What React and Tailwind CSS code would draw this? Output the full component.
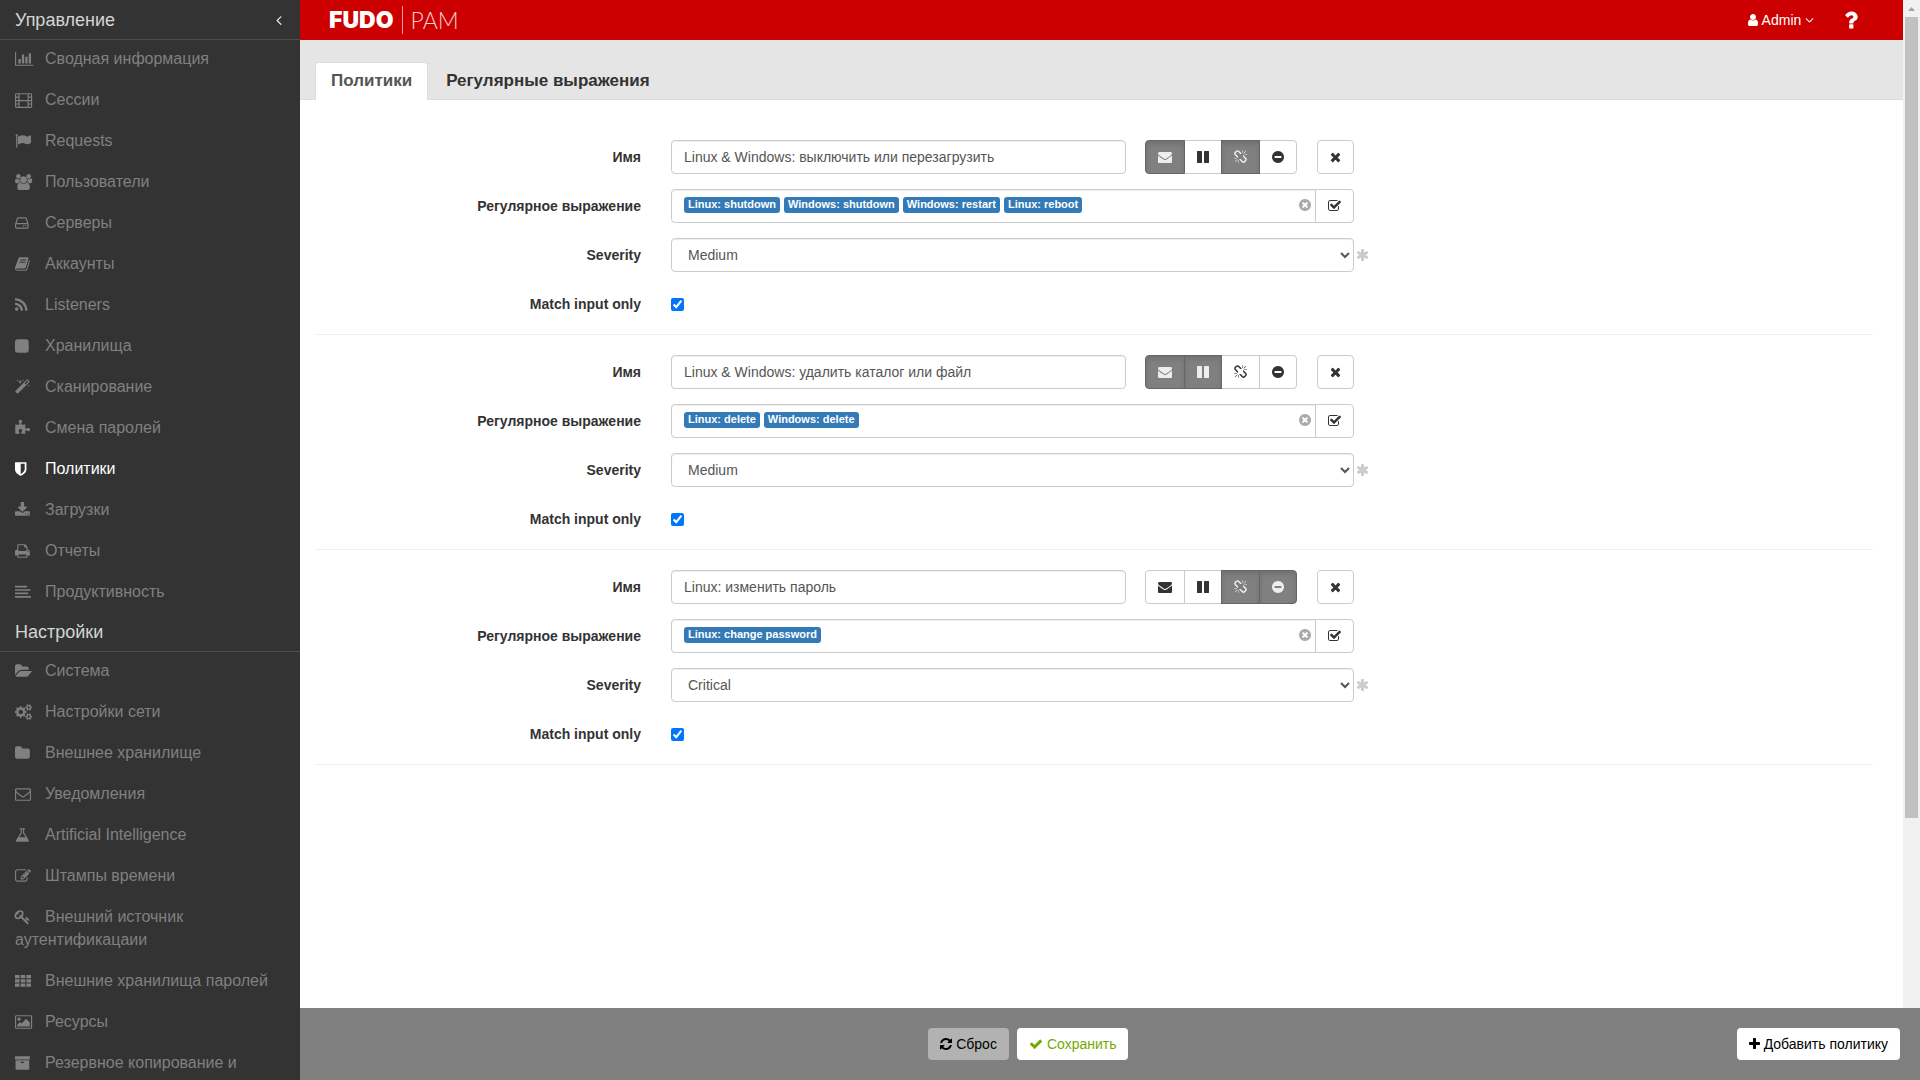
import { useState } from "react";

// [left edge, width, path], drawn on a 1792 unit high grid
const ICONS = {
  chart: [0, 2048, "M640 896v512h-256v-512h256zm384-512v1024h-256v-1024h256zm1024 1152v128h-2048v-1536h128v1408h1920zm-640-896v768h-256v-768h256zm384-384v1152h-256v-1152h256z"],
  film: [0, 1920, "M160 128h1600q66 0 113 47t47 113v1344q0 66-47 113t-113 47h-1600q-66 0-113-47t-47-113v-1344q0-66 47-113t113-47zM128 256v256h256v-256zM128 640v256h256v-256zM128 1024v256h256v-256zM128 1408v256h256v-256zM512 256v640h896v-640zM512 1024v640h896v-640zM1536 256v256h256v-256zM1536 640v256h256v-256zM1536 1024v256h256v-256zM1536 1408v256h256v-256z"],
  flag: [0, 1792, "M320 256q0 72-64 110v1266q0 13-9.5 22.5t-22.5 9.5h-64q-13 0-22.5-9.5t-9.5-22.5v-1266q-64-38-64-110 0-53 37.5-90.5t90.5-37.5 90.5 37.5 37.5 90.5zm1472 64v763q0 25-12.5 38.5t-39.5 27.5q-215 116-369 116-61 0-123.5-22t-108.5-48-115.5-48-142.5-22q-192 0-464 146-17 9-33 9-26 0-45-19t-19-45v-742q0-32 31-55 21-14 79-43 236-120 421-120 107 0 200 29t219 88q38 19 88 19 54 0 117.5-21t110-47 88-47 54.5-21q26 0 45 19t19 45z"],
  users: [0, 1920, "M593 896q-162 5-265 128h-134q-82 0-138-40.5t-56-118.5q0-353 124-353 6 0 43.5 21t97.5 42.5 119 21.5q67 0 133-23-5 37-5 66 0 159 93 293zm1071 637q0 120-73 189.5t-194 69.5h-874q-121 0-194-69.5t-73-189.5q0-53 3.5-103.5t14-109 26.5-108.5 43-97.5 62-81 85.5-53.5 111.5-20q10 0 43 21.5t73 48 107 48 135 21.5 135-21.5 107-48 73-48 43-21.5q61 0 111.5 20t85.5 53.5 62 81 43 97.5 26.5 108.5 14 109 3.5 103.5zm-1024-1277q0 106-75 181t-181 75-181-75-75-181 75-181 181-75 181 75 75 181zm704 384q0 159-112.5 271.5t-271.5 112.5-271.5-112.5-112.5-271.5 112.5-271.5 271.5-112.5 271.5 112.5 112.5 271.5zm576 225q0 78-56 118.5t-138 40.5h-134q-103-123-265-128 93-134 93-293 0-29-5-66 66 23 133 23 59 0 119-21.5t97.5-42.5 43.5-21q124 0 124 353zm-128-609q0 106-75 181t-181 75-181-75-75-181 75-181 181-75 181 75 75 181z"],
  disk: [128, 1536, "M1168 1216q0 33-23.5 56.5t-56.5 23.5-56.5-23.5-23.5-56.5 23.5-56.5 56.5-23.5 56.5 23.5 23.5 56.5zm256 0q0 33-23.5 56.5t-56.5 23.5-56.5-23.5-23.5-56.5 23.5-56.5 56.5-23.5 56.5 23.5 23.5 56.5zm112 160v-320q0-13-9.5-22.5t-22.5-9.5h-1216q-13 0-22.5 9.5t-9.5 22.5v320q0 13 9.5 22.5t22.5 9.5h1216q13 0 22.5-9.5t9.5-22.5zm-1230-480h1180l-157-482q-4-13-16-21.5t-26-8.5h-782q-14 0-26 8.5t-16 21.5zm1358 160v320q0 66-47 113t-113 47h-1216q-66 0-113-47t-47-113v-320q0-25 16-75l197-606q17-53 63-86t101-33h782q55 0 101 33t63 86l197 606q16 50 16 75z"],
  book: [64, 1664, "M1703 478q40 57 18 129l-275 906q-19 64-76.5 107.5t-122.5 43.5h-923q-77 0-148.5-53.5t-99.5-131.5q-24-67-2-127 0-4 3-27t4-37q1-8-3-21.5t-3-19.5q2-11 8-21t16.5-23.5 16.5-23.5q23-38 45-91.5t30-91.5q3-10 .5-30t-.5-28q3-11 17-28t17-23q21-36 42-92t25-90q1-9-2.5-32t.5-28q4-13 22-30.5t22-22.5q19-26 42.5-84.5t27.5-96.5q1-8-3-25.5t-2-26.5q2-8 9-18t18-23 17-21q8-12 16.5-30.5t15-35 16-36 19.5-32 26.5-23.5 36-11.5 47.5 5.5l-1 3q38-9 51-9h761q74 0 114 56t18 130l-274 906q-36 119-71.5 153.5t-128.5 34.5h-869q-27 0-38 15-11 16-1 43 24 70 144 70h923q29 0 56-15.5t35-41.5l300-987q7-22 5-57 38 15 59 43zm-1064 2q-4 13 2 22.5t20 9.5h608q13 0 25.5-9.5t16.5-22.5l21-64q4-13-2-22.5t-20-9.5h-608q-13 0-25.5 9.5t-16.5 22.5zm-83 256q-4 13 2 22.5t20 9.5h608q13 0 25.5-9.5t16.5-22.5l21-64q4-13-2-22.5t-20-9.5h-608q-13 0-25.5 9.5t-16.5 22.5z"],
  rss: [192, 1408, "M576 1344q0 80-56 136t-136 56-136-56-56-136 56-136 136-56 136 56 56 136zm512 123q2 28-17 48-18 21-47 21h-135q-25 0-43-16.5t-20-41.5q-22-229-184.5-391.5t-391.5-184.5q-25-2-41.5-20t-16.5-43v-135q0-29 21-47 17-17 43-17h5q160 13 306 80.5t259 181.5q114 113 181.5 259t80.5 306zm512 2q2 27-18 47-18 20-46 20h-143q-26 0-44.5-17.5t-19.5-42.5q-12-215-101-408.5t-231.5-336-336-231.5-408.5-102q-25-1-42.5-19.5t-17.5-43.5v-143q0-28 20-46 18-18 44-18h3q262 13 501.5 120t425.5 294q187 186 294 425.5t120 501.5z"],
  square: [128, 1536, "M1664 416v960q0 119-84.5 203.5t-203.5 84.5h-960q-119 0-203.5-84.5t-84.5-203.5v-960q0-119 84.5-203.5t203.5-84.5h960q119 0 203.5 84.5t84.5 203.5z"],
  wand: [0, 1664, "M1190 581l293-293-107-107-293 293zm447-293q0 27-18 45l-1286 1286q-18 18-45 18t-45-18l-198-198q-18-18-18-45t18-45l1286-1286q18-18 45-18t45 18l198 198q18 18 18 45zm-1351-190l98 30-98 30-30 98-30-98-98-30 98-30 30-98zm350 162l196 60-196 60-60 196-60-196-196-60 196-60 60-196zm930 478l98 30-98 30-30 98-30-98-98-30 98-30 30-98zm-640-640l98 30-98 30-30 98-30-98-98-30 98-30 30-98z"],
  puzzle: [64, 1728, "M1755 1083q0 81-44.5 135t-123.5 54q-41 0-77.5-17.5t-59-38-56.5-38-71-17.5q-110 0-110 124 0 39 16 115t15 115v5q-22 0-33 1-34 3-97.5 11.5t-115.5 13.5-98 5q-61 0-103-26.5t-42-83.5q0-37 17.5-71t38-56.5 38-59 17.5-77.5q0-79-54-123.5t-135-44.5q-84 0-143 45.5t-59 127.5q0 43 15 83t33.5 64.5 33.5 53 15 50.5q0 45-46 89-37 35-117 35-95 0-245-24-9-2-27.5-4t-27.5-4l-13-2q-1 0-3-1-2 0-2-1v-1024q2 1 17.5 3.5t34 5 21.5 3.5q150 24 245 24 80 0 117-35 46-44 46-89 0-22-15-50.5t-33.5-53-33.5-64.5-15-83q0-82 59-127.5t144-45.5q80 0 134 44.5t54 123.5q0 41-17.5 77.5t-38 59-38 56.5-17.5 71q0 57 42 83.5t103 26.5q64 0 180-15t163-17v2q-1 2-3.5 17.5t-5 34-3.5 21.5q-24 150-24 245 0 80 35 117 44 46 89 46 22 0 50.5-15t53-33.5 64.5-33.5 83-15q82 0 127.5 59t45.5 143z"],
  shield: [256, 1280, "M1344 960v-640h-448v1137q119-63 213-137 235-184 235-360zm192-768v768q0 86-33.5 170.5t-83 150-118 127.5-126.5 103-121 77.5-89.5 49.5-42.5 20q-12 6-26 6t-26-6q-16-7-42.5-20t-89.5-49.5-121-77.5-126.5-103-118-127.5-83-150-33.5-170.5v-768q0-26 19-45t45-19h1152q26 0 45 19t19 45z"],
  download: [64, 1664, "M1344 1344q0-26-19-45t-45-19-45 19-19 45 19 45 45 19 45-19 19-45zm256 0q0-26-19-45t-45-19-45 19-19 45 19 45 45 19 45-19 19-45zm128-224v320q0 40-28 68t-68 28h-1472q-40 0-68-28t-28-68v-320q0-40 28-68t68-28h465l135 136q58 56 136 56t136-56l136-136h464q40 0 68 28t28 68zm-325-569q17 41-14 70l-448 448q-18 19-45 19t-45-19l-448-448q-31-29-14-70 17-39 59-39h256v-448q0-26 19-45t45-19h256q26 0 45 19t19 45v448h256q42 0 59 39z"],
  print: [64, 1664, "M448 1536h896v-256h-896v256zm0-640h896v-384h-160q-40 0-68-28t-28-68v-160h-640v640zm1152 64q0-26-19-45t-45-19-45 19-19 45 19 45 45 19 45-19 19-45zm128 0v416q0 13-9.5 22.5t-22.5 9.5h-224v160q0 40-28 68t-68 28h-960q-40 0-68-28t-28-68v-160h-224q-13 0-22.5-9.5t-9.5-22.5v-416q0-79 56.5-135.5t135.5-56.5h64v-544q0-40 28-68t68-28h672q40 0 88 20t76 48l152 152q28 28 48 76t20 88v256h64q79 0 135.5 56.5t56.5 135.5z"],
  lines: [0, 1792, "M0 192h1344v192h-1344zM0 576h1728v192h-1728zM0 960h1472v192h-1472zM0 1344h1792v192h-1792z"],
  folderOpen: [0, 1920, "M1879 952q0 31-31 66l-336 396q-43 51-120.5 86.5t-143.5 35.5h-1088q-34 0-60.5-13t-26.5-43q0-31 31-66l336-396q43-51 120.5-86.5t143.5-35.5h1088q34 0 60.5 13t26.5 43zm-343-344v160h-832q-94 0-197 47.5t-164 119.5l-337 396-5 6q0-4-.5-12.5t-.5-12.5v-960q0-92 66-158t158-66h320q92 0 158 66t66 158v32h544q92 0 158 66t66 158z"],
  cogs: [0, 1920, "M896 896q0-106-75-181t-181-75-181 75-75 181 75 181 181 75 181-75 75-181zm768 512q0-52-38-90t-90-38-90 38-38 90q0 53 37.5 90.5t90.5 37.5 90.5-37.5 37.5-90.5zm0-1024q0-52-38-90t-90-38-90 38-38 90q0 53 37.5 90.5t90.5 37.5 90.5-37.5 37.5-90.5zm-384 421v185q0 10-7 19.5t-16 10.5l-155 24q-11 35-32 76 34 48 90 115 7 11 7 20 0 12-7 19-23 30-82.5 89.5t-78.5 59.5q-11 0-21-7l-115-90q-37 19-77 31-11 108-23 155-7 24-30 24h-186q-11 0-20-7.5t-10-17.5l-23-153q-34-10-75-31l-118 89q-7 7-20 7-11 0-21-8-144-133-144-160 0-9 7-19 10-14 41-53t47-61q-23-44-35-82l-152-24q-10-1-17-9.5t-7-19.5v-185q0-10 7-19.5t16-10.5l155-24q11-35 32-76-34-48-90-115-7-11-7-20 0-12 7-20 22-30 82-89t79-59q11 0 21 7l115 90q34-18 77-32 11-108 23-154 7-24 30-24h186q11 0 20 7.5t10 17.5l23 153q34 10 75 31l118-89q8-7 20-7 11 0 21 8 144 133 144 160 0 8-7 19-12 16-42 54t-45 60q23 48 34 82l152 23q10 2 17 10.5t7 19.5zm640 533v140q0 16-149 31-12 27-30 52 51 113 51 138 0 4-4 7-122 71-124 71-8 0-46-47t-52-68q-20 2-30 2t-30-2q-14 21-52 68t-46 47q-2 0-124-71-4-3-4-7 0-25 51-138-18-25-30-52-149-15-149-31v-140q0-16 149-31 13-29 30-52-51-113-51-138 0-4 4-7 4-2 35-20t59-34 30-16q8 0 46 46.5t52 67.5q20-2 30-2t30 2q51-71 92-112l6-2q4 0 124 70 4 3 4 7 0 25-51 138 17 23 30 52 149 15 149 31zm0-1024v140q0 16-149 31-12 27-30 52 51 113 51 138 0 4-4 7-122 71-124 71-8 0-46-47t-52-68q-20 2-30 2t-30-2q-14 21-52 68t-46 47q-2 0-124-71-4-3-4-7 0-25 51-138-18-25-30-52-149-15-149-31v-140q0-16 149-31 13-29 30-52-51-113-51-138 0-4 4-7 4-2 35-20t59-34 30-16q8 0 46 46.5t52 67.5q20-2 30-2t30 2q51-71 92-112l6-2q4 0 124 70 4 3 4 7 0 25-51 138 17 23 30 52 149 15 149 31z"],
  folder: [64, 1664, "M1728 608v704q0 92-66 158t-158 66h-1216q-92 0-158-66t-66-158v-960q0-92 66-158t158-66h320q92 0 158 66t66 158v32h672q92 0 158 66t66 158z"],
  mailOutline: [0, 1792, "M1664 1504v-768q-32 36-69 66-268 206-426 338-51 43-83 67t-86.5 48.5-102.5 24.5h-2q-48 0-102.5-24.5t-86.5-48.5-83-67q-158-132-426-338-37-30-69-66v768q0 13 9.5 22.5t22.5 9.5h1472q13 0 22.5-9.5t9.5-22.5zm0-1051v-24.5l-.5-13-3-12.5-5.5-9-9-7.5-14-2.5h-1472q-13 0-22.5 9.5t-9.5 22.5q0 168 147 284 193 152 401 317 6 5 35 29.5t46 37.5 44.5 31.5 50.5 27.5 43 9h2q20 0 43-9t50.5-27.5 44.5-31.5 46-37.5 35-29.5q208-165 401-317 54-43 100.5-115.5t46.5-131.5zm128-37v1088q0 66-47 113t-113 47h-1472q-66 0-113-47t-47-113v-1088q0-66 47-113t113-47h1472q66 0 113 47t47 113z"],
  flask: [64, 1664, "M1591 1448q56 89 21.5 152.5t-140.5 63.5h-1152q-106 0-140.5-63.5t21.5-152.5l503-793v-399h-64q-26 0-45-19t-19-45 19-45 45-19h512q26 0 45 19t19 45-19 45-45 19h-64v399zm-779-725l-272 429h712l-272-429-20-31v-436h-128v436z"],
  edit: [0, 1792, "M888 1184l116-116-152-152-116 116v56h96v96h56zm440-720q-16-16-33 1l-350 350q-17 17-1 33t33-1l350-350q17-17 1-33zm80 594v190q0 119-84.5 203.5t-203.5 84.5h-832q-119 0-203.5-84.5t-84.5-203.5v-832q0-119 84.5-203.5t203.5-84.5h832q63 0 117 25 15 7 18 23 3 17-9 29l-49 49q-14 14-32 8-23-6-45-6h-832q-66 0-113 47t-47 113v832q0 66 47 113t113 47h832q66 0 113-47t47-113v-126q0-13 9-22l64-64q15-15 35-7t20 29zm-96-738l288 288-672 672h-288v-288zm444 132l-92 92-288-288 92-92q28-28 68-28t68 28l152 152q28 28 28 68t-28 68z"],
  key: [64, 1728, "M832 512q0-80-56-136t-136-56-136 56-56 136q0 42 19 83-41-19-83-19-80 0-136 56t-56 136 56 136 136 56 136-56 56-136q0-42-19-83 41 19 83 19 80 0 136-56t56-136zm851 704q0 17-49 66t-66 49q-9 0-28.5-16t-36.5-33-38.5-40-24.5-26l-96 96 220 220q28 28 28 68 0 42-39 81t-81 39q-40 0-68-28l-671-671q-176 131-365 131-163 0-265.5-102.5t-102.5-265.5q0-160 95-313t248-248 313-95q163 0 265.5 102.5t102.5 265.5q0 189-131 365l355 355 96-96q-3-3-26-24.5t-40-38.5-33-36.5-16-28.5q0-17 49-66t66-49q13 0 23 10 6 6 46 44.5t82 79.5 86.5 86 73 78 28.5 41z"],
  grid: [0, 1792, "M0 224h512v352h-512zM640 224h512v352h-512zM1280 224h512v352h-512zM0 704h512v352h-512zM640 704h512v352h-512zM1280 704h512v352h-512zM0 1184h512v352h-512zM640 1184h512v352h-512zM1280 1184h512v352h-512z"],
  image: [0, 1920, "M640 576q0 80-56 136t-136 56-136-56-56-136 56-136 136-56 136 56 56 136zm1024 384v448h-1408v-192l320-320 160 160 512-512zm96-704h-1600q-13 0-22.5 9.5t-9.5 22.5v1216q0 13 9.5 22.5t22.5 9.5h1600q13 0 22.5-9.5t9.5-22.5v-1216q0-13-9.5-22.5t-22.5-9.5zm160 32v1216q0 66-47 113t-113 47h-1600q-66 0-113-47t-47-113v-1216q0-66 47-113t113-47h1600q66 0 113 47t47 113z"],
  archive: [64, 1728, "M1088 832q0-26-19-45t-45-19h-256q-26 0-45 19t-19 45 19 45 45 19h256q26 0 45-19t19-45zm576-192v960q0 26-19 45t-45 19h-1408q-26 0-45-19t-19-45v-960q0-26 19-45t45-19h1408q26 0 45 19t19 45zm64-448v256q0 26-19 45t-45 19h-1536q-26 0-45-19t-19-45v-256q0-26 19-45t45-19h1536q26 0 45 19t19 45z"],
  mail: [0, 1792, "M1792 710v794q0 66-47 113t-113 47h-1472q-66 0-113-47t-47-113v-794q44 49 101 87 362 246 497 345 57 42 92.5 65.5t94.5 48 110 24.5h2q51 0 110-24.5t94.5-48 92.5-65.5q170-123 498-345 57-39 100-87zm0-294q0 79-49 151t-122 123q-376 261-468 325-10 7-42.5 31t-54 38.5-52 32.5-57.5 27-50 9h-2q-23 0-50-9t-57.5-27-52-32.5-54-38.5-42.5-31q-91-64-262-182.5t-205-142.5q-62-42-117-115.5t-55-136.5q0-78 41.5-130t118.5-52h1472q65 0 112.5 47t47.5 113z"],
  pause: [128, 1536, "M1664 192v1408q0 26-19 45t-45 19h-512q-26 0-45-19t-19-45v-1408q0-26 19-45t45-19h512q26 0 45 19t19 45zm-896 0v1408q0 26-19 45t-45 19h-512q-26 0-45-19t-19-45v-1408q0-26 19-45t45-19h512q26 0 45 19t19 45z"],
  unlink: [64, 1664, "M503 1271l-256 256q-10 9-23 9-12 0-23-9-9-10-9-23t9-23l256-256q10-9 23-9t23 9q9 10 9 23t-9 23zm169 41v320q0 14-9 23t-23 9-23-9-9-23v-320q0-14 9-23t23-9 23 9 9 23zm-224-224q0 14-9 23t-23 9h-320q-14 0-23-9t-9-23 9-23 23-9h320q14 0 23 9t9 23zm1264 128q0 120-85 203l-147 146q-83 83-203 83-121 0-204-85l-334-335q-21-21-42-56l239-18 273 274q28 28 68 27.5t68-27.5l147-146q28-28 28-67 0-40-28-68l-274-275 18-239q35 21 56 42l336 336q84 86 84 204zm-617-724l-239 18-273-274q-28-28-68-28-39 0-68 27l-147 146q-28 28-28 67 0 40 28 68l274 274-18 240q-35-21-56-42l-336-336q-84-86-84-204 0-120 85-203l147-146q83-83 203-83 121 0 204 85l334 335q21 21 42 56zm633 84q0 14-9 23t-23 9h-320q-14 0-23-9t-9-23 9-23 23-9h320q14 0 23 9t9 23zm-544-544v320q0 14-9 23t-23 9-23-9-9-23v-320q0-14 9-23t23-9 23 9 9 23zm407 151l-256 256q-11 9-23 9t-23-9q-9-10-9-23t9-23l256-256q10-9 23-9t23 9q9 10 9 23t-9 23z"],
  block: [128, 1536, "M1344 960v-128q0-26-19-45t-45-19h-768q-26 0-45 19t-19 45v128q0 26 19 45t45 19h768q26 0 45-19t19-45zm320-64q0 209-103 385.5t-279.5 279.5-385.5 103-385.5-103-279.5-279.5-103-385.5 103-385.5 279.5-279.5 385.5-103 385.5 103 279.5 279.5 103 385.5z"],
  times: [192, 1408, "M1490 1322q0 40-28 68l-136 136q-28 28-68 28t-68-28l-294-294-294 294q-28 28-68 28t-68-28l-136-136q-28-28-28-68t28-68l294-294-294-294q-28-28-28-68t28-68l136-136q28-28 68-28t68 28l294 294 294-294q28-28 68-28t68 28l136 136q28 28 28 68t-28 68l-294 294 294 294q28 28 28 68z"],
  clear: [128, 1536, "M1277 1122q0-26-19-45l-181-181 181-181q19-19 19-45 0-27-19-46l-90-90q-19-19-46-19-26 0-45 19l-181 181-181-181q-19-19-45-19-27 0-46 19l-90 90q-19 19-19 46 0 26 19 45l181 181-181 181q-19 19-19 45 0 27 19 46l90 90q19 19 46 19 26 0 45-19l181-181 181 181q19 19 45 19 27 0 46-19l90-90q19-19 19-46zm387-226q0 209-103 385.5t-279.5 279.5-385.5 103-385.5-103-279.5-279.5-103-385.5 103-385.5 279.5-279.5 385.5-103 385.5 103 279.5 279.5 103 385.5z"],
  checkSquare: [64, 1664, "M1472 930v318q0 119-84.5 203.5t-203.5 84.5h-832q-119 0-203.5-84.5t-84.5-203.5v-832q0-119 84.5-203.5t203.5-84.5h832q63 0 117 25 15 7 18 23 3 17-9 29l-49 49q-10 10-23 10-3 0-9-2-23-6-45-6h-832q-66 0-113 47t-47 113v832q0 66 47 113t113 47h832q66 0 113-47t47-113v-254q0-13 9-22l64-64q10-10 23-10 6 0 12 3 20 8 20 29zm231-489l-814 814q-24 24-57 24t-57-24l-430-430q-24-24-24-57t24-57l110-110q24-24 57-24t57 24l263 263 647-647q24-24 57-24t57 24l110 110q24 24 24 57t-24 57z"],
  asterisk: [64, 1664, "M1546 1050q46 26 59.5 77.5t-12.5 97.5l-64 110q-26 46-77.5 59.5t-97.5-12.5l-266-153v307q0 52-38 90t-90 38h-128q-52 0-90-38t-38-90v-307l-266 153q-46 26-97.5 12.5t-77.5-59.5l-64-110q-26-46-12.5-97.5t59.5-77.5l266-154-266-154q-46-26-59.5-77.5t12.5-97.5l64-110q26-46 77.5-59.5t97.5 12.5l266 153v-307q0-52 38-90t90-38h128q52 0 90 38t38 90v307l266-153q46-26 97.5-12.5t77.5 59.5l64 110q26 46 12.5 97.5t-59.5 77.5l-266 154z"],
  user: [256, 1280, "M1536 1399q0 109-62.5 187t-150.5 78h-854q-88 0-150.5-78t-62.5-187q0-85 8.5-160.5t31.5-152 58.5-131 94-89 134.5-34.5q131 128 313 128t313-128q76 0 134.5 34.5t94 89 58.5 131 31.5 152 8.5 160.5zm-256-887q0 159-112.5 271.5t-271.5 112.5-271.5-112.5-112.5-271.5 112.5-271.5 271.5-112.5 271.5 112.5 112.5 271.5z"],
  question: [384, 1024, "M1088 1256v240q0 16-12 28t-28 12h-240q-16 0-28-12t-12-28v-240q0-16 12-28t28-12h240q16 0 28 12t12 28zm316-600q0 54-15.5 101t-35 76.5-55 59.5-57.5 43.5-61 35.5q-41 23-68.5 65t-27.5 67q0 17-12 32.5t-28 15.5h-240q-15 0-25.5-18.5t-10.5-37.5v-45q0-83 65-156.5t143-108.5q59-27 84-56t25-76q0-42-46.5-74t-107.5-32q-65 0-108 29-35 25-107 115-13 16-31 16-12 0-25-8l-164-125q-13-10-15.5-25t5.5-28q160-266 464-266 80 0 161 31t146 83 106 127.5 41 158.5z"],
  angleDown: [320, 1152, "M1395 736q0 13-10 23l-466 466q-10 10-23 10t-23-10l-466-466q-10-10-10-23t10-23l50-50q10-10 23-10t23 10l393 393 393-393q10-10 23-10t23 10l50 50q10 10 10 23z"],
  angleLeft: [576, 640, "M1203 544q0 13-10 23l-393 393 393 393q10 10 10 23t-10 23l-50 50q-10 10-23 10t-23-10l-466-466q-10-10-10-23t10-23l466-466q10-10 23-10t23 10l50 50q10 10 10 23z"],
  refresh: [128, 1536, "M1639 1056q0 5-1 7-64 268-268 434.5t-478 166.5q-146 0-282.5-55t-243.5-157l-129 129q-19 19-45 19t-45-19-19-45v-448q0-26 19-45t45-19h448q26 0 45 19t19 45-19 45l-137 137q71 66 161 102t187 36q134 0 250-65t186-179q11-17 53-117 8-23 30-23h192q13 0 22.5 9.5t9.5 22.5zm25-800v448q0 26-19 45t-45 19h-448q-26 0-45-19t-19-45 19-45l138-138q-148-137-349-137-134 0-250 65t-186 179q-11 17-53 117-8 23-30 23h-199q-13 0-22.5-9.5t-9.5-22.5v-7q65-268 270-434.5t480-166.5q146 0 284 55.5t245 156.5l130-129q19-19 45-19t45 19 19 45z"],
  check: [0, 1792, "M1671 566q0 40-28 68l-724 724-136 136q-28 28-68 28t-68-28l-136-136-362-362q-28-28-28-68t28-68l136-136q28-28 68-28t68 28l294 295 656-657q28-28 68-28t68 28l136 136q28 28 28 68z"],
  plus: [192, 1408, "M1600 736v192q0 40-28 68t-68 28h-416v416q0 40-28 68t-68 28h-192q-40 0-68-28t-28-68v-416h-416q-40 0-68-28t-28-68v-192q0-40 28-68t68-28h416v-416q0-40 28-68t68-28h192q40 0 68 28t28 68v416h416q40 0 68 28t28 68z"],
};

const MANAGEMENT = [
  { icon: "chart", label: "Сводная информация" },
  { icon: "film", label: "Сессии" },
  { icon: "flag", label: "Requests" },
  { icon: "users", label: "Пользователи" },
  { icon: "disk", label: "Серверы" },
  { icon: "book", label: "Аккаунты" },
  { icon: "rss", label: "Listeners" },
  { icon: "square", label: "Хранилища" },
  { icon: "wand", label: "Сканирование" },
  { icon: "puzzle", label: "Смена паролей" },
  { icon: "shield", label: "Политики", active: true },
  { icon: "download", label: "Загрузки" },
  { icon: "print", label: "Отчеты" },
  { icon: "lines", label: "Продуктивность" },
];

const SETTINGS = [
  { icon: "folderOpen", label: "Система" },
  { icon: "cogs", label: "Настройки сети" },
  { icon: "folder", label: "Внешнее хранилище" },
  { icon: "mailOutline", label: "Уведомления" },
  { icon: "flask", label: "Artificial Intelligence" },
  { icon: "edit", label: "Штампы времени" },
  { icon: "key", label: "Внешний источник аутентификацаии" },
  { icon: "grid", label: "Внешние хранилища паролей" },
  { icon: "image", label: "Ресурсы" },
  { icon: "archive", label: "Резервное копирование и" },
];

const ACTIONS = [
  { id: "mail", title: "Email" },
  { id: "pause", title: "Pause" },
  { id: "unlink", title: "Terminate" },
  { id: "block", title: "Block" },
];

const POLICIES = [
  {
    id: 1,
    name: "Linux & Windows: выключить или перезагрузить",
    tags: ["Linux: shutdown", "Windows: shutdown", "Windows: restart", "Linux: reboot"],
    severity: "Medium",
    actions: ["mail", "unlink"],
  },
  {
    id: 2,
    name: "Linux & Windows: удалить каталог или файл",
    tags: ["Linux: delete", "Windows: delete"],
    severity: "Medium",
    actions: ["mail", "pause"],
  },
  {
    id: 3,
    name: "Linux: изменить пароль",
    tags: ["Linux: change password"],
    severity: "Critical",
    actions: ["unlink", "block"],
  },
];

function Icon({ name, size = 14, className = "" }) {
  const [left, width, path] = ICONS[name];
  return (
    <svg
      width={(width / 1792) * size}
      height={size}
      viewBox={`${left} 0 ${width} 1792`}
      className={`shrink-0 overflow-visible ${className}`}
      fill="currentColor"
      fillRule={name === "film" ? "evenodd" : "nonzero"}
      aria-hidden="true"
    >
      <path d={path} />
    </svg>
  );
}

function NavSection({ title, items, collapsible }) {
  return (
    <section>
      <div className="flex h-10 items-center justify-between border-b border-[#4d4d4d] pl-[15px] pr-[18px]">
        <h2 className="text-lg text-[#d5d5d5]">{title}</h2>
        {collapsible && (
          <button type="button" aria-label="Свернуть меню" className="text-[#e6e6e6]">
            <Icon name="angleLeft" size={16} />
          </button>
        )}
      </div>
      <ul className="-mt-0.5">
        {items.map((item) => (
          <li key={item.label}>
            <a
              href="#"
              className={`block px-[15px] py-[9px] text-base leading-[23px] ${item.active ? "text-white" : "text-[#808080]"}`}
            >
              <span className="inline-block w-[30px]">
                <Icon name={item.icon} size={16} className="inline-block align-[-3px]" />
              </span>
              {item.label}
            </a>
          </li>
        ))}
      </ul>
    </section>
  );
}

function FormRow({ label, htmlFor, children }) {
  return (
    <div className="flex min-h-[34px] items-center gap-[30px]">
      <label htmlFor={htmlFor} className="w-[326px] shrink-0 text-right text-sm font-bold">
        {label}
      </label>
      <div className="flex max-w-[683px] flex-1 items-center">{children}</div>
    </div>
  );
}

function ActionButtons({ initial }) {
  const [selected, setSelected] = useState(initial);

  const toggle = (id) => {
    setSelected(selected.includes(id) ? selected.filter((s) => s !== id) : [...selected, id]);
  };

  return (
    <div className="flex">
      {ACTIONS.map(({ id, title }) => (
        <button
          key={id}
          type="button"
          title={title}
          aria-pressed={selected.includes(id)}
          onClick={() => toggle(id)}
          className={`-ml-px flex h-[34px] items-center border px-3 first:ml-0 first:rounded-l last:rounded-r ${
            selected.includes(id)
              ? "relative border-[#666] bg-[#808080] text-[#eee] shadow-[inset_0_3px_5px_rgba(0,0,0,0.125)]"
              : "border-[#ccc] bg-white text-[#333]"
          }`}
        >
          <Icon name={id} />
        </button>
      ))}
    </div>
  );
}

function Policy({ policy }) {
  const { id, name, tags, severity, actions } = policy;
  return (
    <div className="mb-5 flex flex-col gap-[15px] border-b border-[#eee] pb-[13px]">
      <FormRow label="Имя" htmlFor={`name-${id}`}>
        <input
          id={`name-${id}`}
          type="text"
          defaultValue={name}
          className="mr-[19px] h-[34px] min-w-0 flex-1 rounded border border-[#ccc] px-3 text-sm text-[#555] shadow-[inset_0_1px_1px_rgba(0,0,0,0.075)]"
        />
        <ActionButtons initial={actions} />
        <button type="button" title="Удалить" className="ml-5 flex h-[34px] items-center rounded border border-[#ccc] px-3">
          <Icon name="times" />
        </button>
      </FormRow>

      <FormRow label="Регулярное выражение" htmlFor={`regex-${id}`}>
        <div className="flex h-[34px] flex-1 items-start rounded-l border border-[#ccc] pl-3 pr-1 pt-[7px] shadow-[inset_0_1px_1px_rgba(0,0,0,0.075)]">
          <div className="flex flex-1 gap-1">
            {tags.map((tag) => (
              <span key={tag} className="h-4 rounded-[3px] bg-[#337ab7] px-1 text-[11px] font-bold leading-[15px] text-white">
                {tag}
              </span>
            ))}
          </div>
          <button type="button" title="Очистить" className="pt-px text-[#aaa]">
            <Icon name="clear" />
          </button>
        </div>
        <button
          id={`regex-${id}`}
          type="button"
          title="Выбрать"
          className="-ml-px flex h-[34px] items-center rounded-r border border-[#ccc] px-3"
        >
          <Icon name="checkSquare" />
        </button>
      </FormRow>

      <FormRow label="Severity" htmlFor={`severity-${id}`}>
        <select
          id={`severity-${id}`}
          defaultValue={severity}
          className="h-[34px] w-full rounded border border-[#ccc] bg-white px-3 text-sm text-[#555] shadow-[inset_0_1px_1px_rgba(0,0,0,0.075)]"
        >
          <option>Low</option>
          <option>Medium</option>
          <option>High</option>
          <option>Critical</option>
        </select>
        <Icon name="asterisk" className="-mr-4 ml-0.5 text-[#ccc]" />
      </FormRow>

      <FormRow label="Match input only" htmlFor={`match-${id}`}>
        <input id={`match-${id}`} type="checkbox" defaultChecked className="size-[13px]" />
      </FormRow>
    </div>
  );
}

function Scrollbar() {
  return (
    <div className="flex w-[17px] shrink-0 flex-col items-center bg-[#f1f1f1]" aria-hidden="true">
      <div className="flex h-[17px] items-center">
        <svg width="7" height="4" viewBox="0 0 7 4" fill="#a3a3a3">
          <path d="M3.5 0L7 4H0z" />
        </svg>
      </div>
      <div className="mb-[190px] w-[13px] flex-1 bg-[#c1c1c1]" />
    </div>
  );
}

export default function App() {
  return (
    <div className="flex h-screen overflow-hidden bg-white font-['Liberation_Sans',Arial,sans-serif] text-sm text-[#333]">
      <nav className="w-[300px] shrink-0 overflow-hidden bg-[#333]">
        <NavSection title="Управление" items={MANAGEMENT} collapsible />
        <NavSection title="Настройки" items={SETTINGS} />
      </nav>

      <div className="flex min-w-0 flex-1 flex-col">
        <div className="flex min-h-0 flex-1">
          <div className="min-w-0 flex-1 overflow-hidden">
            <header className="flex h-10 items-center justify-between bg-[#c00] pl-[29px] pr-[45px] text-white">
              <a href="#" className="flex items-center gap-2 text-[23px] leading-7">
                <span className="font-['Inter',sans-serif] font-black">FUDO</span>
                <span className="h-7 w-px bg-[#eb9999]" />
                <span className="font-['Lato',sans-serif] font-light text-[#f5cccc]">PAM</span>
              </a>
              <div className="flex items-center gap-[30px]">
                <button type="button" className="flex items-center gap-1">
                  <Icon name="user" />
                  Admin
                  <Icon name="angleDown" />
                </button>
                <a href="#" aria-label="Справка">
                  <Icon name="question" size={24} />
                </a>
              </div>
            </header>

            <div className="flex h-[60px] items-end gap-0.5 border-b border-[#ddd] bg-[#e5e5e5] px-[15px]" role="tablist">
              <button
                type="button"
                role="tab"
                aria-selected="true"
                className="-mb-px h-[38px] rounded-t border border-b-0 border-[#ddd] bg-white px-[15px] text-[17px] font-bold text-[#555]"
              >
                Политики
              </button>
              <button
                type="button"
                role="tab"
                aria-selected="false"
                className="-mb-px h-[38px] rounded-t border border-b-0 border-transparent px-[15px] text-[17px] font-bold"
              >
                Регулярные выражения
              </button>
            </div>

            <main className="pl-[15px] pr-[30px] pt-10">
              {POLICIES.map((policy) => (
                <Policy key={policy.id} policy={policy} />
              ))}
            </main>
          </div>
          <Scrollbar />
        </div>

        <footer className="flex h-[72px] shrink-0 items-center bg-[#808080] px-5">
          <div className="flex flex-1 justify-center gap-2">
            <button type="button" className="flex h-8 items-center gap-1 rounded bg-[#b2b2b2] px-3 text-black">
              <Icon name="refresh" />
              Сброс
            </button>
            <button type="button" className="flex h-8 items-center gap-1 rounded bg-white px-3 text-[#76a800]">
              <Icon name="check" />
              Сохранить
            </button>
          </div>
          <button type="button" className="flex h-8 items-center gap-1 rounded bg-white px-3 text-black">
            <Icon name="plus" />
            Добавить политику
          </button>
        </footer>
      </div>
    </div>
  );
}
